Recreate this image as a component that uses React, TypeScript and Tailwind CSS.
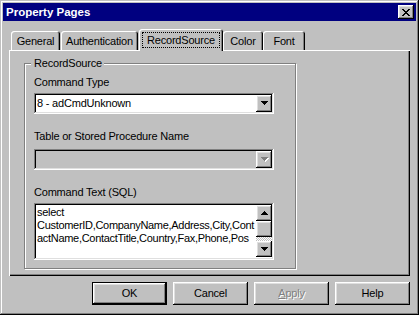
import React from "react";

const raised =
  "shadow-[inset_-1px_-1px_#000,inset_1px_1px_#fff,inset_-2px_-2px_#808080,inset_2px_2px_#dfdfdf]";
const sunken =
  "shadow-[inset_-1px_-1px_#fff,inset_1px_1px_#808080,inset_-2px_-2px_#dfdfdf,inset_2px_2px_#000]";

function DownArrow({ disabled = false }: { disabled?: boolean }) {
  const fill = disabled ? "#808080" : "#000";
  return (
    <svg width="8" height="5" viewBox="0 0 8 5" shapeRendering="crispEdges">
      {disabled && (
        <g fill="#fff">
          <rect x="1" y="1" width="7" height="1" />
          <rect x="2" y="2" width="5" height="1" />
          <rect x="3" y="3" width="3" height="1" />
          <rect x="4" y="4" width="1" height="1" />
        </g>
      )}
      <g fill={fill}>
        <rect x="0" y="0" width="7" height="1" />
        <rect x="1" y="1" width="5" height="1" />
        <rect x="2" y="2" width="3" height="1" />
        <rect x="3" y="3" width="1" height="1" />
      </g>
    </svg>
  );
}

function UpArrow() {
  return (
    <svg width="7" height="4" viewBox="0 0 7 4" shapeRendering="crispEdges">
      <g fill="#000">
        <rect x="3" y="0" width="1" height="1" />
        <rect x="2" y="1" width="3" height="1" />
        <rect x="1" y="2" width="5" height="1" />
        <rect x="0" y="3" width="7" height="1" />
      </g>
    </svg>
  );
}

function CloseGlyph() {
  // pixel X, 8x7
  const rows: [number, number][][] = [
    [[0, 2], [6, 2]],
    [[1, 2], [5, 2]],
    [[2, 4]],
    [[3, 2]],
    [[2, 4]],
    [[1, 2], [5, 2]],
    [[0, 2], [6, 2]],
  ];
  return (
    <svg width="8" height="7" viewBox="0 0 8 7" shapeRendering="crispEdges">
      {rows.map((r, y) =>
        r.map(([x, w]) => <rect key={`${y}-${x}`} x={x} y={y} width={w} height={1} fill="#000" />)
      )}
    </svg>
  );
}

function Combo({ text, disabled = false }: { text?: string; disabled?: boolean }) {
  return (
    <div
      className={`w-[240px] h-[21px] p-[2px] flex ${sunken} ${
        disabled ? "bg-[#c0c0c0]" : "bg-white"
      }`}
    >
      <div className="flex-1 flex items-center pl-[1px] overflow-hidden whitespace-nowrap">
        {text}
      </div>
      <div className={`w-[16px] h-[17px] bg-[#c0c0c0] flex items-center justify-center pl-[1px] ${raised}`}>
        <DownArrow disabled={disabled} />
      </div>
    </div>
  );
}

function Tab({
  label,
  width,
  selected = false,
  className = "",
}: {
  label: string;
  width: string;
  selected?: boolean;
  className?: string;
}) {
  if (selected) {
    return (
      <div
        className={`relative z-10 h-[22px] mb-[-1px] ${width} ${className} bg-[#c0c0c0] rounded-t-[3px] p-[3px] pb-[3px] shadow-[inset_1px_1px_#fff,inset_-1px_0_#000,inset_-2px_0_#808080]`}
      >
        <div className="h-[16px] border border-dotted border-black flex items-center justify-center">
          {label}
        </div>
      </div>
    );
  }
  return (
    <div
      className={`h-[19px] ${width} ${className} bg-[#c0c0c0] rounded-t-[3px] flex items-center justify-center pt-[1px] shadow-[inset_1px_1px_#fff,inset_-1px_0_#000,inset_-2px_0_#808080]`}
    >
      {label}
    </div>
  );
}

function Button({
  children,
  isDefault = false,
  disabled = false,
}: {
  children: React.ReactNode;
  isDefault?: boolean;
  disabled?: boolean;
}) {
  const inner = (
    <div
      className={`h-full w-full flex items-center justify-center ${raised} ${
        disabled ? "text-[#808080] [text-shadow:1px_1px_0_#fff]" : ""
      }`}
    >
      {children}
    </div>
  );
  if (isDefault) {
    return <div className="w-[75px] h-[23px] border border-black">{inner}</div>;
  }
  return <div className="w-[75px] h-[23px]">{inner}</div>;
}

export default function App() {
  return (
    <div
      className={`w-[419px] h-[315px] bg-[#c0c0c0] p-[3px] flex flex-col text-[11px] leading-[13px] tracking-[-0.2px] text-black font-['Liberation_Sans',Arial,sans-serif] shadow-[inset_-1px_-1px_#000,inset_1px_1px_#c0c0c0,inset_-2px_-2px_#808080,inset_2px_2px_#fff]`}
    >
      {/* title bar */}
      <div className="h-[18px] bg-[#000080] flex items-center justify-between pl-[3px] pr-[2px]">
        <span className="text-white font-bold text-[11.5px] tracking-normal">Property Pages</span>
        <div className={`w-[16px] h-[14px] bg-[#c0c0c0] flex items-center justify-center pt-[1px] ${raised}`}>
          <CloseGlyph />
        </div>
      </div>

      {/* tabs + panel */}
      <div className="mt-[8px] mx-[6px]">
        <div className="flex items-end h-[21px] pl-[2px]">
          <Tab label="General" width="w-[49px]" />
          <Tab label="Authentication" width="w-[77px]" className="ml-[1px]" />
          <Tab label="RecordSource" width="w-[84px]" className="ml-[1px]" selected />
          <Tab label="Color" width="w-[40px]" />
          <Tab label="Font" width="w-[42px]" />
        </div>
        <div className="w-[401px] h-[226px] pt-[13px] pl-[15px] shadow-[inset_1px_1px_#fff,inset_-1px_-1px_#000,inset_-2px_-2px_#808080]">
          <div className="relative w-[272px] h-[206px] border border-[#808080] shadow-[inset_1px_1px_#fff,1px_1px_#fff] pl-[9px] pt-[12px]">
            <span className="absolute left-[6px] top-[-7px] pl-[3px] pr-[2px] bg-[#c0c0c0]">
              RecordSource
            </span>
            <div>Command Type</div>
            <div className="mt-[4px]">
              <Combo text="8 - adCmdUnknown" />
            </div>
            <div className="mt-[16px]">Table or Stored Procedure Name</div>
            <div className="mt-[6px]">
              <Combo disabled />
            </div>
            <div className="mt-[16px]">Command Text (SQL)</div>
            <div className={`mt-[4px] w-[240px] h-[57px] p-[2px] bg-white flex ${sunken}`}>
              <div className="flex-1 overflow-hidden pl-[1px] pt-[1px] whitespace-nowrap tracking-[-0.3px]">
                <div>select</div>
                <div>CustomerID,CompanyName,Address,City,Cont</div>
                <div>actName,ContactTitle,Country,Fax,Phone,Pos</div>
              </div>
              <div className="w-[16px] flex flex-col">
                <div className={`h-[16px] bg-[#c0c0c0] flex items-center justify-center ${raised}`}>
                  <UpArrow />
                </div>
                <div className={`h-[16px] bg-[#c0c0c0] ${raised}`} />
                <div className="h-[4px] bg-[repeating-conic-gradient(#c0c0c0_0_25%,#fff_0_50%)] bg-[length:2px_2px]" />
                <div className={`h-[16px] bg-[#c0c0c0] flex items-center justify-center pl-[1px] pt-[1px] ${raised}`}>
                  <DownArrow />
                </div>
              </div>
            </div>
          </div>
        </div>
      </div>

      {/* buttons */}
      <div className="flex justify-end gap-[6px] mt-[6px] mr-[6px]">
        <Button isDefault>OK</Button>
        <Button>Cancel</Button>
        <Button disabled>
          <span>
            <span className="underline">A</span>pply
          </span>
        </Button>
        <Button>Help</Button>
      </div>
    </div>
  );
}
